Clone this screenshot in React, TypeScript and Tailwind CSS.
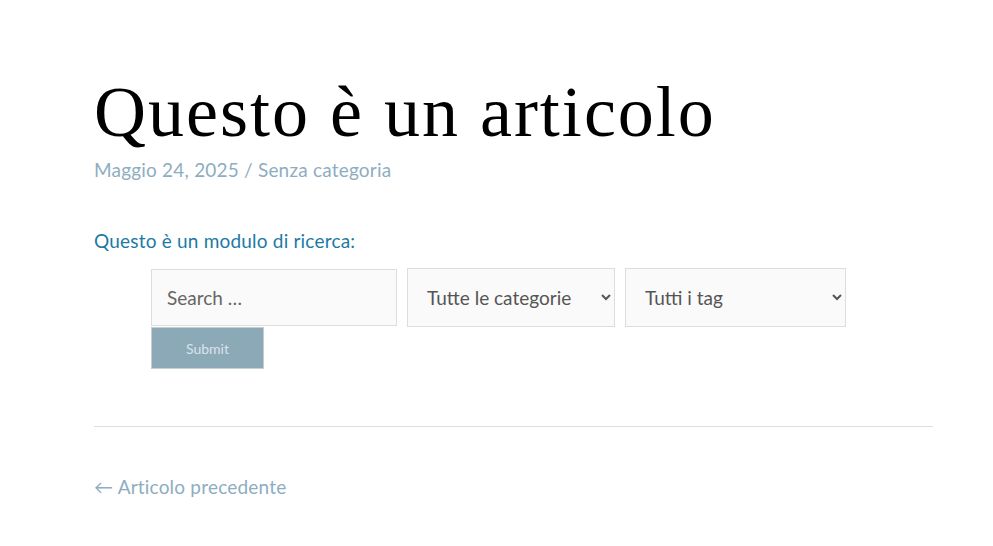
import React from 'react';

const body = { fontFamily: 'Lato, "Noto Sans", sans-serif' };

export default function App() {
  return (
    <div className="min-h-[546px] bg-white" style={body}>
      <article className="ml-[94px] w-[839px] pt-[69px]">
        <h1
          className="text-[72px] leading-[86px] tracking-[2px] text-black"
          style={{ fontFamily: '"Liberation Serif", serif' }}
        >
          Questo è un articolo
        </h1>
        <div className="mt-[2px] text-[19px] leading-[26px] tracking-[0.2px] text-[#8eadbf]">
          Maggio 24, 2025 / Senza categoria
        </div>

        <p className="mt-[46px] text-[19px] leading-[24px] tracking-[0.2px] text-[#1b7aa5]">
          Questo è un modulo di ricerca:
        </p>

        <form className="ml-[57px] mt-[15px]" onSubmit={(e) => e.preventDefault()}>
          <div className="flex items-center gap-[10px]">
            <input
              type="text"
              placeholder="Search …"
              className="h-[57px] w-[246px] border border-[#ddd] bg-[#fafafa] px-[15px] text-[19px] text-[#555] placeholder:text-[#666] outline-none"
            />
            <select className="h-[59px] w-[208px] border border-[#ddd] bg-[#fafafa] px-[15px] text-[19px] text-[#555] outline-none">
              <option>Tutte le categorie</option>
            </select>
            <select className="h-[59px] w-[221px] border border-[#ddd] bg-[#fafafa] px-[15px] text-[19px] text-[#555] outline-none">
              <option>Tutti i tag</option>
            </select>
          </div>
          <button
            type="submit"
            className="block h-[42px] w-[113px] border border-[#c4cdd2] bg-[#8ca9b8] text-[14px] text-[#d9e3e9]"
          >
            Submit
          </button>
        </form>

        <hr className="mt-[57px] border-0 border-t border-[#ddd]" />

        <a href="#" className="mt-[47px] inline-block text-[19px] leading-[26px] tracking-[0.2px] text-[#8eadbf]">
          ← Articolo precedente
        </a>
      </article>
    </div>
  );
}
